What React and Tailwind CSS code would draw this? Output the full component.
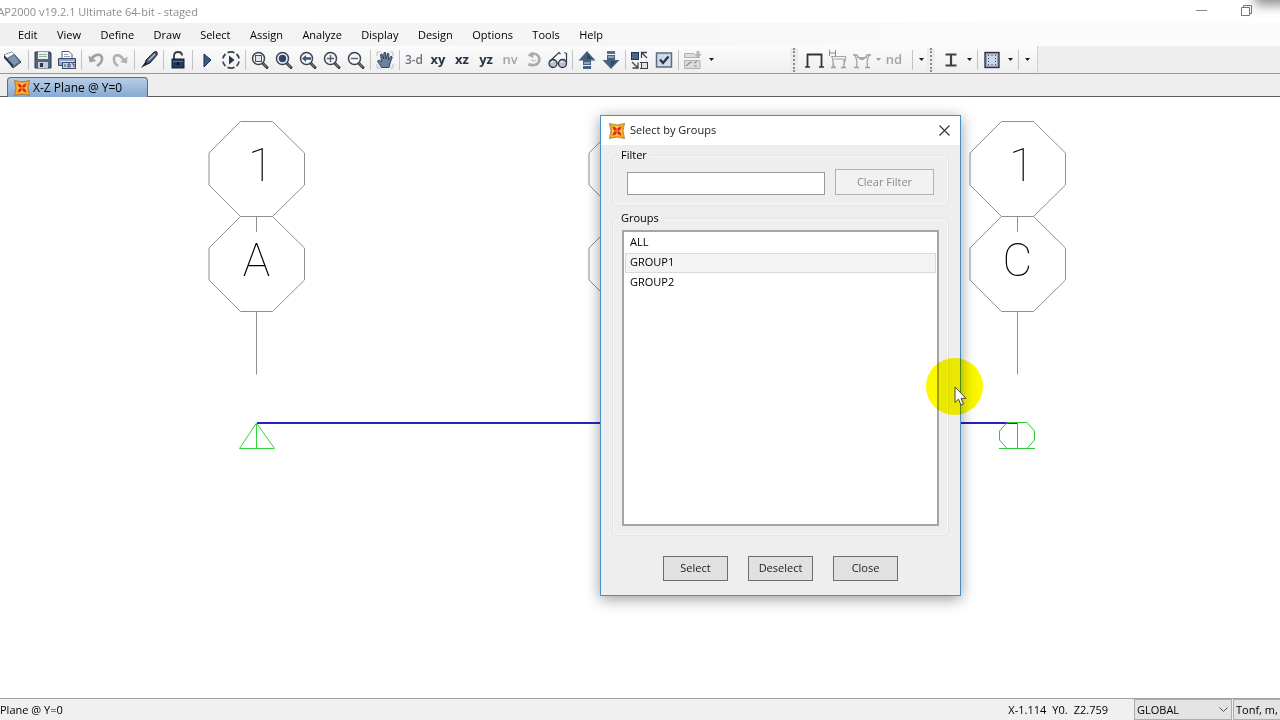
import React, { useState } from 'react';

const menus = [
  'Edit', 'View', 'Define', 'Draw', 'Select', 'Assign',
  'Analyze', 'Display', 'Design', 'Options', 'Tools', 'Help',
];

const groups = ['ALL', 'GROUP1', 'GROUP2'];

/* ---------- Icons ---------- */

const Icon = ({ children }) => (
  <svg className="h-5 w-5 shrink-0" viewBox="0 0 20 20" fill="none" aria-hidden="true">
    {children}
  </svg>
);

const Magnifier = ({ children }) => (
  <Icon>
    <path d="M12.5 13 L17 17.5" stroke="#3a3a3a" strokeWidth="3" strokeLinecap="round" />
    <path d="M12.8 13.2 L16.6 17" stroke="#9a9a9a" strokeWidth="1" strokeLinecap="round" />
    <circle cx="8.5" cy="8.5" r="6" fill="#f4f6f9" stroke="#3b4250" strokeWidth="1.5" />
    {children}
  </Icon>
);

const icons = {
  newModel: (
    <Icon>
      <path d="M0 5 L8 2 L17 12 L9 18 Z" fill="#5c7696" stroke="#2f4260" />
      <path d="M0 5 L8 2 L10 4 L3 8 Z" fill="#f4f7fa" />
      <path d="M0 5 L9 15 V18 L0 8 Z" fill="#27374f" />
      <path d="M4 9 L10 5 L15 12 L10 15 Z" fill="#7d95b3" />
    </Icon>
  ),
  save: (
    <Icon>
      <path d="M2 2 H17 L18 3 V18 H2 Z" fill="#56657c" stroke="#2c394d" />
      <rect x="5" y="2" width="10" height="7" fill="#e6edf3" />
      <path d="M6 4.5 H14 M6 6.5 H14" stroke="#9db29d" />
      <rect x="5" y="12" width="10" height="6" fill="#c3ccd8" />
      <rect x="7" y="13" width="3" height="4" fill="#2c394d" />
    </Icon>
  ),
  print: (
    <Icon>
      <path d="M5 8 V1.5 H12 L15 4.5 V8" fill="#fff" stroke="#49597a" />
      <path d="M7 4.5 H11 M7 6.5 H13" stroke="#8aa0bd" />
      <path d="M1.5 8.5 H18.5 V15.5 H1.5 Z" fill="#8ea4c2" stroke="#3a4b68" />
      <path d="M3 11.5 H17" stroke="#dfe8f2" />
      <rect x="5.5" y="12.5" width="13" height="6" fill="#c9d5e5" stroke="#3a4b68" />
      <path d="M8 14 V17 M11 14 H13 V17 H11 Z M15 14 H17 V17" stroke="#3a4b68" />
    </Icon>
  ),
  undo: (
    <Icon>
      <path d="M5 10 C8 4 15 3 16 8 C16.5 11.5 14 14 11 16" stroke="#a0a0a0" strokeWidth="2.6" />
      <path d="M2.5 5.5 L3.5 12.5 L10.5 11 Z" fill="#a0a0a0" />
    </Icon>
  ),
  redo: (
    <Icon>
      <path d="M14 11 C11 4 5 4 4 8 C3.5 11 5 14 8 16" stroke="#b0b0b0" strokeWidth="2.6" />
      <path d="M17.5 6.5 L17 13.5 L10 12 Z" fill="#b0b0b0" />
    </Icon>
  ),
  pen: (
    <Icon>
      <path d="M7 10 L15 2 Q19 0 18 5 L11 13 L6 15 Z" fill="#46566f" stroke="#1e2a3d" />
      <path d="M9.5 10.5 L16 4" stroke="#b9c6d8" strokeWidth="1.3" />
      <path d="M6.5 11.5 L2 18 L9 14" fill="#1b2433" />
    </Icon>
  ),
  lock: (
    <Icon>
      <path d="M6 9 V6 Q6 2 10 2 Q14 2 14 5.5" stroke="#333c48" strokeWidth="1.8" />
      <rect x="4" y="9" width="12" height="9" fill="#1f3a5c" stroke="#16202e" />
      <path d="M5 11.5 H15" stroke="#56779c" />
      <path d="M10 12 V15" stroke="#0b1018" strokeWidth="2" />
    </Icon>
  ),
  run: (
    <Icon>
      <path d="M7 4 L14 10 L7 17 Z" fill="#3c5a80" stroke="#152c4d" />
    </Icon>
  ),
  runStaged: (
    <Icon>
      <path
        d="M6.500 2.700 Q10 1 13.500 2.700 M6.500 17.300 Q10 19 13.500 17.300 M4.500 4 Q2.300 6 2 8.500 M4.500 16 Q2.300 14 2 11.500 M15.500 4 Q17.700 6 18 8.500 M15.500 16 Q17.700 14 18 11.500"
        stroke="#3a3f47"
        strokeWidth="1.7"
      />
      <path d="M8 5.5 L13.5 10 L8 14.5 Z" fill="#24344c" />
    </Icon>
  ),
  zoomWindow: (
    <Magnifier><rect x="5.5" y="5.5" width="6" height="6" fill="#dfe5ee" stroke="#4c5666" /></Magnifier>
  ),
  zoomFull: (
    <Magnifier><circle cx="8.5" cy="8.5" r="3.7" fill="#2d456b" /></Magnifier>
  ),
  zoomPrevious: (
    <Magnifier><path d="M4 8.5 L8 5 V7.2 H13 V9.8 H8 V12 Z" fill="#36547c" /></Magnifier>
  ),
  zoomIn: (
    <Magnifier><path d="M5 8.5 H12 M8.5 5 V12" stroke="#566070" strokeWidth="1.4" /></Magnifier>
  ),
  zoomOut: (
    <Magnifier><path d="M5 8.5 H12" stroke="#566070" strokeWidth="1.4" /></Magnifier>
  ),
  pan: (
    <Icon>
      <path d="M2 6 V2 H6 M15 2 H18 V6 M2 14 V18 H6 M15 18 H18 V14" stroke="#b9bec6" />
      <path d="M6.5 17.5 L2.5 11 L4 10 L6.5 12 L5.5 4.5 L7 4 L8.5 9 L9 2.5 H10.5 L11 9 L12.5 3.2 L14 3.8 L13.4 10 L16 6 L17.3 7 L15.5 12 L14 17.5 Z" fill="#6b819e" stroke="#2b3a50" strokeWidth="0.9" />
    </Icon>
  ),
  rotate: (
    <Icon>
      <path d="M6 4.5 C13 2 16.5 7 15 11.5 C13.5 15.5 8 16 4.5 14" stroke="#aaaaaa" strokeWidth="2.6" />
      <path d="M3.5 5.5 L9 1.5 L9.5 8 Z" fill="#aaaaaa" />
      <path d="M7.5 9.5 Q9 12 12 10" stroke="#c8c8c8" strokeWidth="1.5" />
    </Icon>
  ),
  glasses: (
    <Icon>
      <circle cx="5" cy="13.5" r="4" fill="#b7c2cf" stroke="#2e3744" strokeWidth="1.3" />
      <circle cx="14.5" cy="13.5" r="4" fill="#b7c2cf" stroke="#2e3744" strokeWidth="1.3" />
      <path d="M3.5 12.5 L5 11.5 M13 12.5 L14.5 11.5" stroke="#fff" strokeWidth="1.5" />
      <path d="M1.5 11.5 L11 2.5 L12.5 4 M9 13 H10.5 M18.5 12 V3.5 L16.5 2.5" stroke="#2e3744" strokeWidth="1.2" />
    </Icon>
  ),
  up: (
    <Icon>
      <path d="M10 1 L18.5 10.5 H14 V15 H6 V10.5 H1.5 Z" fill="#48617f" />
      <path d="M10 3 L15 9 H10 Z" fill="#2f4866" />
      <rect x="6" y="16" width="8" height="3" fill="#48617f" />
      <rect x="7" y="12" width="6" height="2" fill="#8ea2ba" />
    </Icon>
  ),
  down: (
    <Icon>
      <rect x="6" y="1" width="8" height="3" fill="#58708e" />
      <path d="M10 19 L1.5 10 H6 V5 H14 V10 H18.5 Z" fill="#48617f" />
      <path d="M10 17 L15 11 H10 Z" fill="#2f4866" />
      <rect x="7" y="6" width="6" height="2" fill="#8ea2ba" />
    </Icon>
  ),
  shrink: (
    <Icon>
      <rect x="1.5" y="2.5" width="7" height="7" fill="#4b668c" stroke="#22324a" />
      <path d="M11.5 8 V2.5 H17 M12 3 L17 8" stroke="#3a414c" strokeWidth="1.3" />
      <path d="M2 12 L7 17 M8 12.5 V18 H2.5" stroke="#3a414c" strokeWidth="1.3" />
      <rect x="11.5" y="12.5" width="6" height="6" fill="#dde3eb" stroke="#3a414c" />
      <path d="M10 12.5 H19 M10 18.5 H19" stroke="#3a414c" strokeDasharray="2 1" />
    </Icon>
  ),
  check: (
    <Icon>
      <rect x="2.5" y="3" width="15" height="14" fill="#cfd9e8" stroke="#5b6a80" strokeWidth="1.5" />
      <path d="M6 9.5 L9 13 L14.5 6.5" stroke="#2b3648" strokeWidth="2.3" />
    </Icon>
  ),
  assign: (
    <Icon>
      <path d="M11 3.5 H1.5 V7.5 H17 M1.5 10.500 H17 V18.5 H1.5 Z" fill="#dedede" stroke="#b0b0b0" />
      <path d="M3 16 L7 12.500 H9 M11 16 H14 M11 13 L14 11.500" stroke="#8c8c8c" strokeWidth="1.2" />
      <path d="M13.5 1 H16.5 V4 H19 L15 8 L11 4 H13.5 Z" fill="#b5b5b5" />
    </Icon>
  ),
  frame: (
    <Icon>
      <path d="M3.5 17 V4.5 H17.5 V17" stroke="#333" strokeWidth="1.8" />
      <path d="M1 17 H6 M15 17 H20" stroke="#333" strokeWidth="1.6" />
    </Icon>
  ),
  frameLoad: (
    <Icon>
      <path d="M1.5 0 V6 M7.5 0 V6 M1.5 3 H7.5" stroke="#8c8c8c" />
      <path d="M3 6.5 H18 M6 9 H16 M4 6.5 L6 17 M18 6.5 L15.5 17 M5 9 V17 M16 9 V17" stroke="#a5a5a5" strokeWidth="1.2" />
      <path d="M3 17.5 H8 M13 17.5 H18" stroke="#a0a0a0" strokeWidth="1.3" />
    </Icon>
  ),
  frameShape: (
    <Icon>
      <path d="M1 5 H5 Q10 14 15 5 H19 M2 4 Q6 9 4.500 17 M18 4 Q14 9 15.500 17 M5 7 L10 8 L15 7" stroke="#a5a5a5" strokeWidth="1.3" />
      <path d="M2 17.5 H7 M13 17.5 H18" stroke="#a0a0a0" strokeWidth="1.3" />
    </Icon>
  ),
  ibeam: (
    <Icon>
      <path d="M4.5 4.5 H15.5 M4.5 15.5 H15.5 M10 4 V16" stroke="#3d434c" strokeWidth="2.2" />
    </Icon>
  ),
  area: (
    <Icon>
      <rect x="3" y="2.5" width="14" height="15" fill="#98a4b8" stroke="#303743" strokeWidth="1.4" />
      <rect x="5" y="4.5" width="10" height="11" fill="#cbd6ea" />
      <path d="M6 5.5 H7 M9.500 5.500 H10.500 M13 5.500 H14 M6 14.500 H7 M9.500 14.500 H10.500 M13 14.500 H14 M6 8.500 H7 M13 8.500 H14 M6 11.500 H7 M13 11.500 H14" stroke="#39424f" />
    </Icon>
  ),
};

const AppLogo = () => (
  <svg className="h-4 w-4 shrink-0" viewBox="0 0 16 16" aria-hidden="true">
    <path d="M0.5 0.5 Q8 3.5 15.5 0.5 Q12.5 8 15.5 15.5 Q8 12.5 0.5 15.5 Q3.5 8 0.5 0.5 Z" fill="#f5a81c" stroke="#a86a2a" strokeWidth="0.8" />
    <path d="M3.5 5 L6 3.5 H10 L12.5 5 V11 L10 12.5 H6 L3.5 11 Z" fill="#ffdf50" />
    <path d="M4 4 L7 5 L8 6.5 L9 5 L12 4 L11 7 L9.5 8 L11 9 L12 12 L9 11 L8 9.5 L7 11 L4 12 L5 9 L6.5 8 L5 7 Z" fill="#e0281e" stroke="#e0281e" strokeWidth="0.8" />
    <path d="M8 4 V12 M4 8 H12" stroke="#ffc53a" strokeWidth="0.6" />
  </svg>
);

/* ---------- Toolbar ---------- */

const ToolButton = ({ label, children }) => (
  <button type="button" aria-label={label} className="flex h-6 w-6 shrink-0 items-center justify-center hover:bg-blue-100">
    {children}
  </button>
);

const ViewButton = ({ children, muted }) => (
  <button
    type="button"
    className={`flex h-6 w-6 shrink-0 items-center justify-center text-[13px] leading-none ${muted ? 'font-semibold text-[#a3a3a3]' : 'font-bold text-[#263245]'}`}
  >
    {children}
  </button>
);

const Divider = () => (
  <div className="flex h-5 w-[5px] shrink-0 justify-center">
    <div className="w-px bg-[#c4c4c4]" />
  </div>
);

const Arrow = ({ label, muted }) => (
  <button type="button" aria-label={label} className={`flex h-6 shrink-0 items-center justify-center ${muted ? 'w-2' : 'w-3'}`}>
    <svg className="h-[3px] w-[5px]" viewBox="0 0 5 3" aria-hidden="true">
      <path d="M0 0 H5 L2.5 3 Z" fill={muted ? '#a0a0a0' : '#1c1c1c'} />
    </svg>
  </button>
);

const Grip = () => (
  <div className="mr-1 flex h-6 w-2 shrink-0 justify-center bg-[#ececec]">
    <div className="w-0 border-l-2 border-dotted border-[#8d8d8d]" />
  </div>
);

const toolGroups = [
  ['newModel'],
  ['save', 'print'],
  ['undo', 'redo'],
  ['pen'],
  ['lock'],
  ['run', 'runStaged'],
  ['zoomWindow', 'zoomFull', 'zoomPrevious', 'zoomIn', 'zoomOut'],
  ['pan'],
];

const Toolbar = () => (
  <div className="flex h-7 items-center overflow-hidden border-b border-[#999] bg-[#eee]">
    <div className="flex h-full w-[1038px] shrink-0 items-center border-r border-[#d0d0d0] bg-gradient-to-b from-[#fcfcfc] to-[#eeeeee] pr-1 pl-[2px]">
      {toolGroups.map((group) => (
        <React.Fragment key={group[0]}>
          {group.map((name) => (
            <ToolButton key={name} label={name}>{icons[name]}</ToolButton>
          ))}
          <Divider />
        </React.Fragment>
      ))}
      <button type="button" className="flex h-6 w-6 shrink-0 items-center justify-center text-xs font-semibold whitespace-nowrap text-[#6a7280]">3-d</button>
      <ViewButton>xy</ViewButton>
      <ViewButton>xz</ViewButton>
      <ViewButton>yz</ViewButton>
      <ViewButton muted>nv</ViewButton>
      <ToolButton label="Rotate">{icons.rotate}</ToolButton>
      <ToolButton label="Perspective">{icons.glasses}</ToolButton>
      <Divider />
      <ToolButton label="Move up">{icons.up}</ToolButton>
      <ToolButton label="Move down">{icons.down}</ToolButton>
      <Divider />
      <ToolButton label="Shrink objects">{icons.shrink}</ToolButton>
      <ToolButton label="Display options">{icons.check}</ToolButton>
      <Divider />
      <ToolButton label="Assign">{icons.assign}</ToolButton>
      <Arrow label="Assign options" />
      <div className="ml-auto flex items-center">
        <Grip />
        <ToolButton label="Frame">{icons.frame}</ToolButton>
        <ToolButton label="Frame loads">{icons.frameLoad}</ToolButton>
        <ToolButton label="Deformed shape">{icons.frameShape}</ToolButton>
        <Arrow label="Shape options" muted />
        <ViewButton muted>nd</ViewButton>
        <div className="ml-1 flex items-center">
          <Divider />
          <Arrow label="More frame tools" />
        </div>
        <Grip />
        <ToolButton label="Frame section">{icons.ibeam}</ToolButton>
        <Arrow label="Frame section options" />
        <Divider />
        <ToolButton label="Area section">{icons.area}</ToolButton>
        <Arrow label="Area section options" />
        <Divider />
        <Arrow label="More section tools" />
      </div>
    </div>
  </div>
);

/* ---------- Model view ---------- */

// One grid line with its two bubbles, x is the grid line position
const GridLine = ({ x, label }) => (
  <g transform={`translate(${x} 0)`}>
    <g stroke="#8f8f8f" fill="none">
      <path d="M-16 24.5 H16 L48 56 V88 L16 119.5 H-16 L-47.5 88 V56 Z" />
      <path d="M-16 119.5 L-47.5 151 V183 L-16 214.5 H16 L48 183 V151 L16 119.5" />
      <path d="M0 119.5 V135 M0 214.5 V277.5" />
    </g>
    {label && (
      <g className="font-['Roboto'] text-[46px] font-thin" fill="#000" textAnchor="middle">
        <text x="4" y="84">1</text>
        <text x="0" y="179">{label}</text>
      </g>
    )}
  </g>
);

const ModelView = () => (
  <svg className="block h-[600px] w-[1280px]" viewBox="0 0 1280 600" role="img" aria-label="Model elevation">
    <GridLine x={256.5} label="A" />
    <GridLine x={636.5} />
    <GridLine x={1017.5} label="C" />
    <path d="M257 326 H1017" stroke="#2a1fc4" strokeWidth="2" />
    <path d="M256.5 326 L239.5 351.5 H274.5 Z M256.5 326 V351.5" stroke="#2fd83a" fill="none" />
    <path d="M1007 325.5 H1027 L1034.5 334 V343 L1027 351.5 H1007 L999.5 343 V334 Z M1017.5 325.5 V351.5 M999 351.5 H1035" stroke="#2fc83a" fill="none" />
  </svg>
);

/* ---------- Dialog ---------- */

const DialogButton = ({ children }) => (
  <button type="button" className="h-[25px] w-[65px] border border-[#6e6e6e] bg-[#e1e1e1] text-[#222] hover:bg-blue-100">
    {children}
  </button>
);

const SelectByGroups = () => {
  const [filter, setFilter] = useState('');
  const visible = groups.filter((g) => g.includes(filter.toUpperCase()));

  return (
    <div
      role="dialog"
      aria-labelledby="dialog-title"
      className="absolute top-[18px] left-[600px] w-[361px] border border-[#4a8fc4] bg-[#eee] pb-[14px] shadow-[0_3px_14px_rgba(0,0,0,0.4)]"
    >
      <div className="flex h-[29px] items-center bg-white pr-2 pl-2">
        <AppLogo />
        <h2 id="dialog-title" className="ml-[5px] text-[#222]">Select by Groups</h2>
        <button type="button" aria-label="Close dialog" className="ml-auto flex h-4 w-4 items-center justify-center">
          <svg className="h-[11px] w-[11px]" viewBox="0 0 11 11" aria-hidden="true">
            <path d="M0.5 0.5 L10.5 10.5 M10.5 0.5 L0.5 10.5" stroke="#333" strokeWidth="1.1" />
          </svg>
        </button>
      </div>

      <div className="px-[11px]">
        <fieldset className="h-[61px] rounded border border-[#e2e2e2] px-[14px] shadow-[inset_0_0_0_1px_#f8f8f8]">
          <legend className="-ml-2 bg-[#eee] px-[2px] leading-5">Filter</legend>
          <div className="mt-1 flex items-end gap-[10px]">
            <input
              type="text"
              aria-label="Filter"
              value={filter}
              onChange={(e) => setFilter(e.target.value)}
              className="h-[23px] w-[198px] border border-[#9a9a9a] bg-white px-1 outline-none"
            />
            <button type="button" disabled className="h-[26px] w-[99px] border border-[#b2b2b2] bg-[#f2f2f2] text-[#8a8a8a]">
              Clear Filter
            </button>
          </div>
        </fieldset>

        <fieldset className="mt-[2px] h-[328px] rounded border border-[#e2e2e2] px-[9px] shadow-[inset_0_0_0_1px_#f8f8f8]">
          <legend className="-ml-[3px] bg-[#eee] px-[2px] leading-5">Groups</legend>
          <select
            size={3}
            aria-label="Groups"
            className="mt-[2px] block h-[296px] w-full border-2 border-[#a3a5a8] bg-white bg-none p-px outline-none"
          >
            {visible.map((name) => (
              <option
                key={name}
                className={`h-5 border px-1 py-0 leading-[18px] ${name === 'GROUP1' ? 'border-[#dadada] bg-[#f3f3f3]' : 'border-transparent'}`}
              >
                {name}
              </option>
            ))}
          </select>
        </fieldset>
      </div>

      <div className="mt-[20px] flex justify-center gap-5">
        <DialogButton>Select</DialogButton>
        <DialogButton>Deselect</DialogButton>
        <DialogButton>Close</DialogButton>
      </div>
    </div>
  );
};

const Pointer = () => (
  <>
    <div className="pointer-events-none absolute top-[261px] left-[926px] h-[57px] w-[57px] rounded-full bg-[#fbf800] mix-blend-multiply" />
    <svg className="pointer-events-none absolute top-[289px] left-[954px] h-5 w-[14px]" viewBox="0 0 14 20" aria-hidden="true">
      <path d="M1 1 V16.5 L4.5 13.2 L7 19 L9.5 18 L7 12.3 H12 Z" fill="#fff" stroke="#444" />
    </svg>
  </>
);

/* ---------- App ---------- */

const App = () => (
  <div className="flex min-h-screen flex-col overflow-hidden bg-white font-['Open_Sans','Noto_Sans',sans-serif] text-[11px] text-black">
    {/* Title bar */}
    <header className="relative flex h-[23px] items-center overflow-hidden bg-white">
      <div className="flex w-[198px] shrink-0 justify-end pt-[2px] whitespace-nowrap text-[#8c8c8c]">
        SAP2000 v19.2.1 Ultimate 64-bit - staged
      </div>
      <div className="mr-[28px] mb-[2px] ml-auto flex items-center gap-[34px]">
        <button type="button" aria-label="Minimize" className="flex h-3 w-[11px] items-center">
          <span className="h-px w-full bg-[#888]" />
        </button>
        <button type="button" aria-label="Restore" className="h-[11px] w-[11px]">
          <svg className="h-[11px] w-[11px]" viewBox="0 0 11 11" fill="none" aria-hidden="true">
            <path d="M0.5 2.5 H8.5 V10.5 H0.5 Z M2.5 2.5 V0.5 H10.5 V8.5 H8.5" stroke="#777" />
          </svg>
        </button>
      </div>
      <div className="absolute -top-2 -right-2 h-2 w-7 shadow-[0_0_12px_5px_rgba(0,0,0,0.45)]" />
    </header>

    {/* Menu */}
    <nav className="flex h-[23px] items-center bg-gradient-to-r from-[#f0f0f0] to-[#fbfbfb] to-80% pl-[9px]">
      <div className="flex w-[603px] justify-between pt-px">
        {menus.map((name) => (
          <button key={name} type="button" className="px-[9px] hover:bg-blue-100">{name}</button>
        ))}
      </div>
    </nav>

    <Toolbar />

    {/* Window tabs */}
    <div className="flex h-[23px] items-end border-b border-[#5c5c5c] bg-[#eee] pl-[7px]">
      <button
        type="button"
        className="-mb-px flex h-5 w-[141px] items-center gap-[3px] rounded-t border border-b-0 border-[#5f6b7a] bg-gradient-to-b from-[#b9cde5] to-[#86a8d2] pl-[6px] text-xs"
      >
        <AppLogo />
        X-Z Plane @ Y=0
      </button>
    </div>

    <main className="relative flex-1 overflow-hidden bg-white">
      <ModelView />
      <SelectByGroups />
      <Pointer />
    </main>

    {/* Status bar */}
    <footer className="flex h-[22px] items-center overflow-hidden border-t border-[#a0a0a0] bg-[#f0f0f0]">
      <span className="pt-[2px]">Plane @ Y=0</span>
      <div className="ml-auto flex h-full shrink-0 items-center">
        <div className="mr-[26px] flex gap-[6px] pt-[2px]">
          <span>X-1.114</span>
          <span>Y0.</span>
          <span>Z2.759</span>
        </div>
        <div className="relative h-full w-[98px]">
          <select aria-label="Coordinate system" className="h-full w-full appearance-none border border-[#adadad] bg-[#e3e3e3] pt-px pl-[2px]">
            <option>GLOBAL</option>
          </select>
          <svg className="pointer-events-none absolute top-2 right-1 h-[5px] w-[9px]" viewBox="0 0 9 5" fill="none" aria-hidden="true">
            <path d="M0.5 0.5 L4.5 4.5 L8.5 0.5" stroke="#555" />
          </svg>
        </div>
        <select aria-label="Units" className="ml-px h-full w-[47px] appearance-none border border-r-0 border-[#adadad] bg-[#e3e3e3] pt-px pl-[2px]">
          <option>Tonf, m, C</option>
        </select>
      </div>
    </footer>
  </div>
);

export default App;
